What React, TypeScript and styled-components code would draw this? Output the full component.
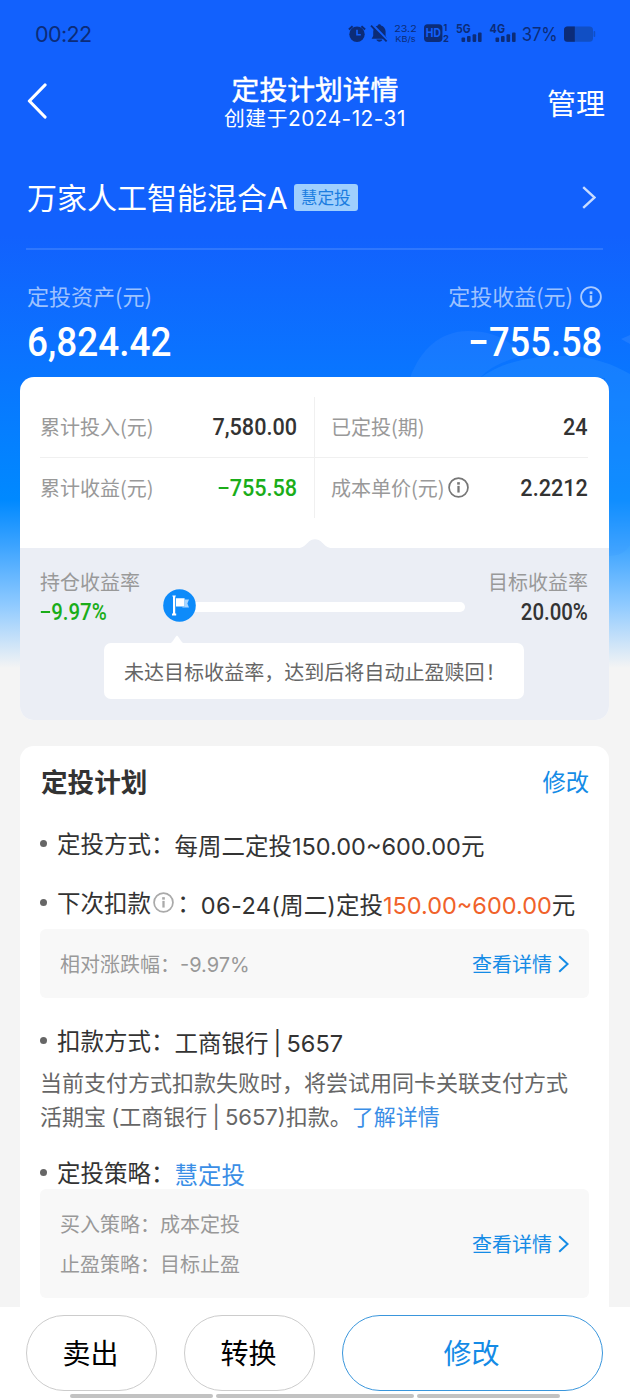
import React from 'react';
import styled, { createGlobalStyle } from 'styled-components';

const Global = createGlobalStyle`
  * { box-sizing: border-box; }
  html, body { margin: 0; padding: 0; }
  body {
    width: 630px;
    height: 1400px;
    overflow: hidden;
    background: #f4f4f4;
    font-family: Inter, 'Noto Sans CJK SC', sans-serif;
    color: #333;
  }
`;

const Page = styled.div`
  position: relative;
  width: 630px;
  height: 1400px;
  display: flex;
  flex-direction: column;
  overflow: hidden;
  background: linear-gradient(
    to bottom,
    #1261fd 0,
    #1261fd 235px,
    #0b72ff 350px,
    #0089ff 500px,
    #3ba3ff 545px,
    #8fcaff 605px,
    #f4f4f4 668px
  );
`;

const Wave = styled.svg`
  position: absolute;
  left: 400px;
  top: 320px;
  width: 230px;
  height: 260px;
`;

const StatusBar = styled.div`
  position: relative;
  height: 68px;
  flex: none;
  padding: 0 34px 0 35px;
  display: flex;
  align-items: center;
  justify-content: space-between;
  color: #0c2c78;
`;

const Clock = styled.span`
  font-size: 21.5px;
  letter-spacing: -0.6px;
`;

const StatusIcons = styled.svg`
  display: block;
  width: 256px;
  height: 36px;
`;

const Header = styled.header`
  position: relative;
  height: 68px;
  flex: none;
  padding: 0 25px 0 27px;
  display: grid;
  grid-template-columns: 100px 1fr 100px;
  align-items: center;
  color: #fff;
`;

const BackIcon = styled.svg`
  display: block;
  width: 20px;
  height: 36px;
  margin-bottom: 2px;
`;

const Titles = styled.div`
  display: flex;
  flex-direction: column;
  align-items: center;
  padding: 3px 2px 0 0;
`;

const Title = styled.h1`
  margin: 0;
  font-size: 27.8px;
  line-height: 30px;
  font-weight: 400;
  -webkit-text-stroke: 0.5px currentColor;
`;

const Subtitle = styled.div`
  font-size: 20.8px;
  line-height: 28px;
  letter-spacing: 0.5px;
  white-space: nowrap;
`;

const Manage = styled.span`
  justify-self: end;
  padding-top: 5px;
  font-size: 29px;
  line-height: 40px;
`;

const FundRow = styled.div`
  position: relative;
  height: 114px;
  flex: none;
  margin: 0 27px 0 26px;
  padding: 11px 7px 0 1px;
  display: flex;
  align-items: center;
  color: #fff;
  border-bottom: 2px solid rgba(255, 255, 255, 0.13);
`;

const FundName = styled.span`
  font-size: 30px;
  line-height: 40px;
`;

const Tag = styled.span`
  height: 27px;
  margin: 0 auto 0 6px;
  padding: 0 7px;
  border-radius: 3px;
  background: #9fcffd;
  color: #1b7de0;
  font-size: 16.7px;
  line-height: 28px;
`;

const Summary = styled.div`
  position: relative;
  height: 127px;
  flex: none;
  padding: 29px 28px 0 27px;
  display: flex;
  justify-content: space-between;
`;

const SummaryItem = styled.div<{ $right?: boolean }>`
  display: flex;
  flex-direction: column;
  gap: 6px;
  align-items: ${(p) => (p.$right ? 'flex-end' : 'flex-start')};
  color: #fff;
`;

const SummaryLabel = styled.div`
  display: flex;
  align-items: center;
  gap: 7px;
  height: 32px;
  font-size: 22px;
  line-height: 32px;
  font-family: 'Noto Sans CJK SC', sans-serif;
  color: rgba(255, 255, 255, 0.6);

  svg {
    margin-top: 3px;
  }
`;

const Num = styled.span<{ $size?: number; $color?: string; $left?: boolean; $squeeze?: number }>`
  display: inline-block;
  font-family: Roboto, sans-serif;
  font-weight: 500;
  font-size: ${(p) => p.$size ?? 24.3}px;
  line-height: 1.2;
  color: ${(p) => p.$color ?? '#333'};
  transform: scaleX(${(p) => p.$squeeze ?? 0.89});
  transform-origin: ${(p) => (p.$left ? 'left' : 'right')} center;
  white-space: nowrap;
`;

const Minus = styled.span`
  display: inline-block;
  width: 0.42em;
  height: 0.1em;
  margin: 0 0.07em 0 0.06em;
  vertical-align: 0.29em;
  background: currentColor;
`;

const StatCard = styled.section`
  position: relative;
  margin: 0 21px 0 20px;
  height: 343px;
  flex: none;
  border-radius: 14px;
  background: #fff;
  overflow: hidden;
`;

const StatGrid = styled.div`
  height: 171px;
  padding: 20px 21px 0 20px;
  display: grid;
  grid-template-columns: 274px 1fr;
  grid-template-rows: 61px 60px;
`;

const StatCell = styled.div<{ $right?: boolean; $top?: boolean }>`
  display: flex;
  align-items: center;
  justify-content: space-between;
  padding: ${(p) => (p.$right ? '0 0 0 16px' : '0 17px 0 0')};
  border-left: ${(p) => (p.$right ? '1px solid #f0f0f0' : 'none')};
  border-bottom: ${(p) => (p.$top ? '1px solid #f0f0f0' : 'none')};
`;

const StatLabel = styled.span`
  display: flex;
  align-items: center;
  gap: 3px;
  font-family: 'Noto Sans CJK SC', sans-serif;
  font-size: 20px;
  line-height: 30px;
  color: #999;

  svg {
    margin-bottom: 2px;
  }
`;

const GoalPanel = styled.div`
  position: relative;
  height: 172px;
  background: #ebeef5;
  padding: 19px 21px 0 20px;
`;

const Notch = styled.svg`
  position: absolute;
  left: 278px;
  top: -10px;
  width: 34px;
  height: 11px;
`;

const GoalRow = styled.div`
  display: flex;
  justify-content: space-between;
`;

const GoalSide = styled.div<{ $right?: boolean }>`
  display: flex;
  flex-direction: column;
  align-items: ${(p) => (p.$right ? 'flex-end' : 'flex-start')};
  width: 110px;
`;

const Track = styled.div`
  display: flex;
  align-items: center;
  width: 302px;
  height: 33px;
  margin: 22px 1px 0 0;

  svg {
    position: relative;
    z-index: 1;
  }
`;

const TrackLine = styled.div`
  flex: 1;
  height: 10px;
  margin: 2px 0 0 -4px;
  border-radius: 0 5px 5px 0;
  background: #fff;
`;

const Tip = styled.div`
  position: absolute;
  left: 84px;
  top: 95px;
  width: 420px;
  height: 56px;
  padding-left: 20px;
  border-radius: 7px;
  background: #fff;
  color: #666;
  font-size: 20.05px;
  line-height: 57px;
  white-space: nowrap;
  font-family: 'Noto Sans CJK SC', sans-serif;
`;

const Bang = styled.span`
  display: inline-block;
  margin-left: 1px;
`;

const TipArrow = styled.svg`
  position: absolute;
  left: 65px;
  top: -8px;
  width: 16px;
  height: 9px;
`;

const PlanCard = styled.section`
  position: relative;
  margin: 26px 21px 0 20px;
  height: 561px;
  flex: none;
  padding: 15px 20px 0 20px;
  border-radius: 14px 14px 0 0;
  background: #fff;
`;

const PlanHead = styled.div`
  display: flex;
  justify-content: space-between;
  align-items: center;
  height: 41px;
`;

const PlanTitle = styled.h2`
  margin: 0 0 0 1px;
  font-size: 26.6px;
  line-height: 40px;
  font-weight: 700;
`;

const Edit = styled.span`
  padding-top: 2px;
  font-size: 23.3px;
  line-height: 40px;
  color: #148be6;
`;

const Item = styled.div<{ $top: number }>`
  display: flex;
  align-items: center;
  height: 36px;
  margin-top: ${(p) => p.$top}px;
  font-size: 23.5px;
  line-height: 36px;
  white-space: nowrap;
`;

const Dot = styled.i`
  width: 7px;
  height: 7px;
  margin: 0 10px 4px 0;
  border-radius: 50%;
  background: #666;
`;

const ItemLabel = styled.span`
  display: flex;
  align-items: center;

  svg {
    margin: 0 1px 3px 0;
  }
`;

const Value = styled.span<{ $color?: string }>`
  padding-top: 3px;
  word-spacing: -1.5px;
  color: ${(p) => p.$color ?? '#333'};
`;

const Digits = styled.span<{ $color?: string; $spacing?: number }>`
  letter-spacing: ${(p) => p.$spacing ?? 0}px;
  color: ${(p) => p.$color ?? 'inherit'};
`;

const InfoBox = styled.div<{ $h: number; $top: number }>`
  display: flex;
  justify-content: space-between;
  align-items: center;
  height: ${(p) => p.$h}px;
  margin-top: ${(p) => p.$top}px;
  padding: 2px 20px 0;
  border-radius: 6px;
  background: #f8f8f8;
  color: #999;
  font-size: 20px;
  line-height: 40px;
`;

const More = styled.span`
  display: flex;
  align-items: center;
  gap: 6px;
  color: #148be6;

  svg {
    margin-bottom: 2px;
  }
`;

const Note = styled.p`
  margin: 6px 0 0;
  font-size: 22px;
  line-height: 34px;
  color: #666;
  white-space: nowrap;
  word-spacing: -1px;
`;

const NoteLink = styled.a`
  color: #3a8ee6;
`;

const Footer = styled.footer`
  position: relative;
  flex: 1;
  padding: 8px 27px 0 26px;
  background: #fff;
  display: flex;
  flex-direction: column;
`;

const Actions = styled.div`
  display: grid;
  grid-template-columns: 131px 131px 261px;
  justify-content: space-between;
`;

const Action = styled.button<{ $primary?: boolean }>`
  height: 76px;
  padding: 0 2px 2px 0;
  border-radius: 38px;
  border: 1px solid ${(p) => (p.$primary ? '#3a96dc' : '#ccc')};
  background: #fff;
  color: ${(p) => (p.$primary ? '#148be6' : '#000')};
  font-family: 'Noto Sans CJK SC', sans-serif;
  font-size: 28px;
  line-height: 72px;
`;

const Handles = styled.div`
  display: grid;
  grid-template-columns: 143px 198px 143px;
  gap: 3px;
  margin: 3px 0 0 44px;
`;

const Handle = styled.div`
  height: 4px;
  border-radius: 2px;
  background: #c2c2c2;
`;

const Info = ({ size, color }: { size: number; color: string }) => (
  <svg width={size} height={size} viewBox="0 0 22 22" fill="none">
    <circle cx="11" cy="11" r="9.9" stroke={color} strokeWidth="1.8" />
    <rect x="9.8" y="9.3" width="2.4" height="7" fill={color} />
    <rect x="9.6" y="5.4" width="2.8" height="2.6" fill={color} />
  </svg>
);

const Chevron = ({ w, h, color, stroke }: { w: number; h: number; color: string; stroke: number }) => (
  <svg width={w} height={h} viewBox={`0 0 ${w} ${h}`} fill="none">
    <path d={`M1.2 1.2 L${w - 1.4} ${h / 2} L1.2 ${h - 1.2}`} stroke={color} strokeWidth={stroke} />
  </svg>
);

const Status = () => (
  <StatusIcons viewBox="340 16 256 36" fill="#0c2c78">
    <circle cx="357" cy="34.3" r="7.7" />
    <path d="M348.9 29.6 L352.6 26.3 M365.1 29.6 L361.4 26.3" stroke="#0c2c78" strokeWidth="2" />
    <path d="M357 29.8 V34.8 H360.8" fill="none" stroke="#1261fd" strokeWidth="1.6" />
    <path d="M371.6 38.8 L373.2 36 V31.6 C373.2 28.2 375.4 26 377.8 25.4 C378.2 23.8 380.6 23.8 381 25.4 C383.6 26.2 385.6 28.2 385.6 31.6 V36 L387.2 38.8 Z" />
    <path d="M376.4 39.6 H382.4 C381.8 42.4 377 42.4 376.4 39.6 Z" />
    <path d="M372.6 25 L388 41" stroke="#1261fd" strokeWidth="2.6" />
    <path d="M371 25.6 L386.6 41.4" stroke="#0c2c78" strokeWidth="1.8" />
    <text x="394.3" y="32.2" fontSize="9.6" textLength="22.4" lengthAdjust="spacingAndGlyphs" fontFamily="Inter">23.2</text>
    <text x="395.3" y="42.2" fontSize="8" textLength="20.4" lengthAdjust="spacingAndGlyphs" fontFamily="Inter">KB/s</text>
    <rect x="424" y="24.3" width="18.4" height="17.6" rx="3.6" />
    <text x="425.8" y="37.2" fontSize="11.4" fontWeight="700" textLength="15" lengthAdjust="spacingAndGlyphs" fill="#1261fd" fontFamily="Inter">HD</text>
    <text x="443.6" y="31.4" fontSize="8.6" fontWeight="700" fontFamily="Inter">1</text>
    <text x="443" y="42" fontSize="9.4" fontWeight="700" fontFamily="Inter">2</text>
    <text x="456" y="33" fontSize="11.6" fontWeight="700" textLength="14.6" lengthAdjust="spacingAndGlyphs" fontFamily="Inter">5G</text>
    <rect x="461.5" y="37.5" width="3.6" height="4.5" rx="1" />
    <rect x="467" y="36" width="3.6" height="6" rx="1" />
    <rect x="472.6" y="34.3" width="3.6" height="7.7" rx="1" />
    <rect x="478" y="32.5" width="3.6" height="9.5" rx="1" />
    <text x="489.6" y="33" fontSize="11.6" fontWeight="700" textLength="15.4" lengthAdjust="spacingAndGlyphs" fontFamily="Inter">4G</text>
    <rect x="495.5" y="37.5" width="3.6" height="4.5" rx="1" />
    <rect x="501" y="36" width="3.6" height="6" rx="1" />
    <rect x="506.5" y="34.3" width="3.6" height="7.7" rx="1" />
    <rect x="512" y="32.5" width="3.6" height="9.5" rx="1" />
    <text x="521.7" y="41" fontSize="18.4" textLength="36" lengthAdjust="spacingAndGlyphs" fontFamily="Inter">37%</text>
    <rect x="564" y="26.5" width="29" height="15.3" rx="3.6" fill="#114fc4" />
    <rect x="593.6" y="31" width="1.6" height="6" rx="0.8" fill="#114fc4" />
    <path d="M567.6 26.5 H574.8 V41.8 H567.6 A3.6 3.6 0 0 1 564 38.2 V30.1 A3.6 3.6 0 0 1 567.6 26.5 Z" />
  </StatusIcons>
);

export default function App() {
  return (
    <>
      <Global />
      <Page>
        <Wave viewBox="400 320 230 260">
          <path
            d="M410 378 C420 350 440 331 468 331 C494 331 512 341 522 356 C500 362 488 369 480 378 Z"
            fill="#fff"
            fillOpacity="0.05"
          />
          <path d="M480 378 C505 360 535 356 565 356 C592 356 615 365 630 374 V545 C625 554 616 556 605 556 V378 Z" fill="#3a9bff" fillOpacity="0.28" />
          <path d="M621 339 L630 335 V344 Z" fill="#fff" fillOpacity="0.08" />
        </Wave>
        <StatusBar>
          <Clock>00:22</Clock>
          <Status />
        </StatusBar>
        <Header>
          <BackIcon viewBox="0 0 20 36" fill="none">
            <path d="M18 2 L2.4 18 L18 34" stroke="#fff" strokeWidth="3.2" strokeLinecap="round" strokeLinejoin="round" />
          </BackIcon>
          <Titles>
            <Title>定投计划详情</Title>
            <Subtitle>创建于2024-12-31</Subtitle>
          </Titles>
          <Manage>管理</Manage>
        </Header>
        <FundRow>
          <FundName>万家人工智能混合A</FundName>
          <Tag>慧定投</Tag>
          <Chevron w={14} h={23} color="#c9dcff" stroke={2.4} />
        </FundRow>
        <Summary>
          <SummaryItem>
            <SummaryLabel>定投资产(元)</SummaryLabel>
            <Num $size={41.5} $color="#fff" $left>6,824.42</Num>
          </SummaryItem>
          <SummaryItem $right>
            <SummaryLabel>
              定投收益(元)
              <Info size={22} color="rgba(255,255,255,.65)" />
            </SummaryLabel>
            <Num $size={41.5} $color="#fff" $squeeze={0.875}><Minus />755.58</Num>
          </SummaryItem>
        </Summary>
        <StatCard>
          <StatGrid>
            <StatCell $top>
              <StatLabel>累计投入(元)</StatLabel>
              <Num>7,580.00</Num>
            </StatCell>
            <StatCell $right $top>
              <StatLabel>已定投(期)</StatLabel>
              <Num>24</Num>
            </StatCell>
            <StatCell>
              <StatLabel>累计收益(元)</StatLabel>
              <Num $color="#1aad19"><Minus />755.58</Num>
            </StatCell>
            <StatCell $right>
              <StatLabel>
                成本单价(元)
                <Info size={21} color="#777" />
              </StatLabel>
              <Num>2.2212</Num>
            </StatCell>
          </StatGrid>
          <GoalPanel>
            <Notch viewBox="0 0 34 11">
              <path d="M0 11 V10 C5 10 7 7 10 4.4 C14 0.3 20 0.3 24 4.4 C27 7 29 10 34 10 V11 Z" fill="#ebeef5" />
            </Notch>
            <GoalRow>
              <GoalSide>
                <StatLabel>持仓收益率</StatLabel>
                <Num $color="#1aad19" $left $squeeze={0.84}><Minus />9.97%</Num>
              </GoalSide>
              <Track>
                <svg width="33" height="33" viewBox="0 0 33 33">
                  <circle cx="16.5" cy="16.5" r="16.3" fill="#0d8bfa" />
                  <path d="M9.4 6.6 H12.8 V7.6 H12.2 V24.6 H13.2 V26.4 H9 V24.6 H10 V7.6 H9.4 Z" fill="#fff" />
                  <path d="M13 9.2 H21.6 V17.4 H13 Z" fill="#fff" />
                  <path d="M21.6 10.6 H26 L24.4 14.5 L26 18.4 H19.4 V17.4 H21.6 Z" fill="#a9d6ff" />
                </svg>
                <TrackLine />
              </Track>
              <GoalSide $right>
                <StatLabel>目标收益率</StatLabel>
                <Num $squeeze={0.84}>20.00%</Num>
              </GoalSide>
            </GoalRow>
            <Tip>
              <TipArrow viewBox="0 0 16 9">
                <path d="M0 9 C4 8 5 3 8 0.5 C11 3 12 8 16 9 Z" fill="#fff" />
              </TipArrow>
              未达目标收益率，达到后将自动止盈赎回<Bang>！</Bang>
            </Tip>
          </GoalPanel>
        </StatCard>
        <PlanCard>
          <PlanHead>
            <PlanTitle>定投计划</PlanTitle>
            <Edit>修改</Edit>
          </PlanHead>
          <Item $top={25}>
            <Dot />
            <ItemLabel>定投方式：</ItemLabel>
            <Value>每周二定投<Digits>150.00~600.00</Digits>元</Value>
          </Item>
          <Item $top={23}>
            <Dot />
            <ItemLabel>
              下次扣款&#8202;
              <Info size={21} color="#aaa" />&#8202;：
            </ItemLabel>
            <Value>
              <Digits $spacing={0.4}>06-24(</Digits>周二<Digits>)</Digits>定投<Digits $color="#f0622a">150.00~600.00</Digits>元
            </Value>
          </Item>
          <InfoBox $h={69} $top={7}>
            <span>相对涨跌幅：-9.97%</span>
            <More>查看详情<Chevron w={11} h={18} color="#148be6" stroke={2} /></More>
          </InfoBox>
          <Item $top={26}>
            <Dot />
            <ItemLabel>扣款方式：</ItemLabel>
            <Value>工商银行 | <Digits>5657</Digits></Value>
          </Item>
          <Note>
            当前支付方式扣款失败时，将尝试用同卡关联支付方式
            <br />
            活期宝 (工商银行 | 5657)扣款。<NoteLink>了解详情</NoteLink>
          </Note>
          <Item $top={22}>
            <Dot />
            <ItemLabel>定投策略：</ItemLabel>
            <Value $color="#3a8ee6">慧定投</Value>
          </Item>
          <InfoBox $h={109} $top={-3}>
            <span>买入策略：成本定投<br />止盈策略：目标止盈</span>
            <More>查看详情<Chevron w={11} h={18} color="#148be6" stroke={2} /></More>
          </InfoBox>
        </PlanCard>
        <Footer>
          <Actions>
            <Action>卖出</Action>
            <Action>转换</Action>
            <Action $primary>修改</Action>
          </Actions>
          <Handles>
            <Handle />
            <Handle />
            <Handle />
          </Handles>
        </Footer>
      </Page>
    </>
  );
}
